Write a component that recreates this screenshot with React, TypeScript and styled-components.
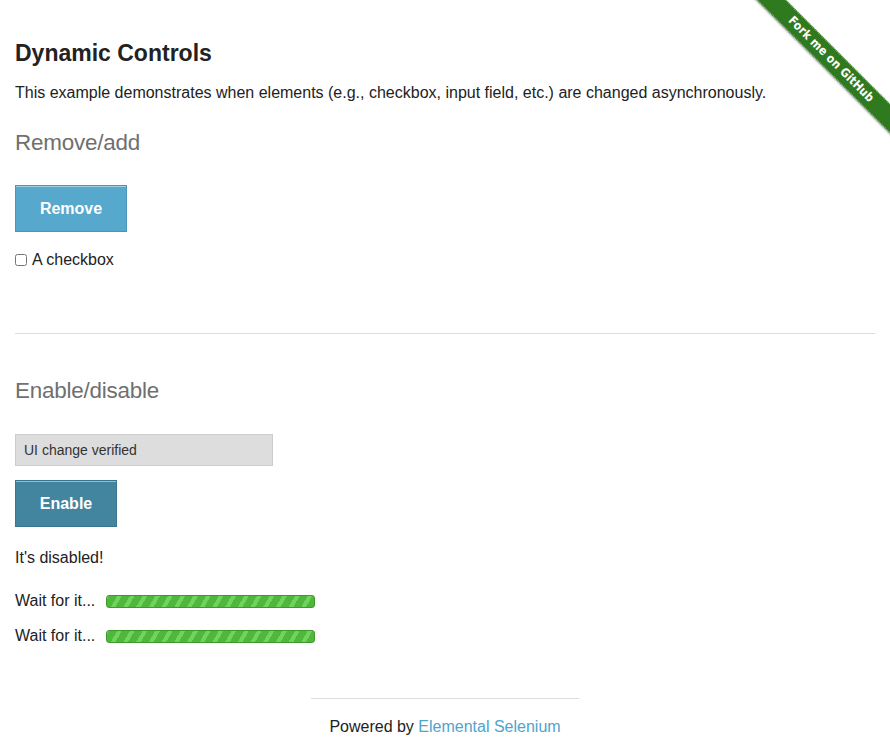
import React from "react";
import styled, { createGlobalStyle } from "styled-components";

const GlobalStyle = createGlobalStyle`
  body {
    margin: 0;
    background: #fff;
    font-family: "Liberation Sans", Arial, sans-serif;
    color: #222;
  }
`;

const App = () => {
  return (
    <>
      <GlobalStyle />
      <Page>
        <Ribbon>
          <Band>Fork me on GitHub</Band>
        </Ribbon>
        <Title>Dynamic Controls</Title>
        <Intro>
          This example demonstrates when elements (e.g., checkbox, input field,
          etc.) are changed asynchronously.
        </Intro>
        <Section>Remove/add</Section>
        <Button $w={112} $tone="light" style={{ marginTop: 28 }}>
          Remove
        </Button>
        <CheckRow>
          <Box type="checkbox" />A checkbox
        </CheckRow>
        <Rule />
        <Section style={{ marginTop: 43 }}>Enable/disable</Section>
        <Field value="UI change verified" disabled readOnly />
        <Button $w={102} $tone="dark" style={{ marginTop: 14 }}>
          Enable
        </Button>
        <Message>It's disabled!</Message>
        <Loading style={{ marginTop: 23 }}>
          Wait for it...
          <Bar />
        </Loading>
        <Loading style={{ marginTop: 15 }}>
          Wait for it...
          <Bar />
        </Loading>
        <Footer>
          <FootRule />
          <FootText>
            Powered by <a href="#">Elemental Selenium</a>
          </FootText>
        </Footer>
      </Page>
    </>
  );
};

export default App;

const Page = styled.div`
  position: relative;
  padding: 39px 15px 0;
  min-height: 717px;
  overflow: hidden;
`;
const Ribbon = styled.div`
  position: absolute;
  top: 0;
  right: 0;
  width: 149px;
  height: 149px;
  overflow: hidden;
`;
const Band = styled.div`
  position: absolute;
  left: -21px;
  top: 49px;
  width: 222px;
  height: 21px;
  box-sizing: border-box;
  transform: rotate(45deg);
  background: #2f7a1f;
  border-top: 1px dotted rgba(255, 255, 255, 0.55);
  border-bottom: 1px dotted rgba(255, 255, 255, 0.55);
  box-shadow: 0 1px 2px rgba(0, 0, 0, 0.35);
  color: #fff;
  font-family: "DejaVu Sans Condensed", "DejaVu Sans", sans-serif;
  font-weight: bold;
  font-size: 12px;
  line-height: 19px;
  text-align: center;
  letter-spacing: 0.1px;
`;
const Title = styled.h3`
  margin: 0;
  font-size: 23px;
  line-height: 28px;
  font-weight: bold;
  color: #222;
`;
const Intro = styled.p`
  margin: 16px 0 0;
  font-size: 16px;
  line-height: 20px;
`;
const Section = styled.h4`
  margin: 26px 0 0;
  font-size: 22.4px;
  line-height: 28px;
  font-weight: normal;
  color: #6f6f6f;
  letter-spacing: -0.2px;
`;
const Button = styled.button<{ $w: number; $tone: "light" | "dark" }>`
  display: block;
  width: ${(p) => p.$w}px;
  height: 47px;
  padding: 0;
  border: 1px solid ${(p) => (p.$tone === "light" ? "#4b95b8" : "#3a7590")};
  background: ${(p) => (p.$tone === "light" ? "#56a8cd" : "#43849f")};
  box-shadow: inset 0 1px 0 rgba(255, 255, 255, 0.45);
  color: #fff;
  font-family: "Liberation Sans", Arial, sans-serif;
  font-weight: bold;
  font-size: 16px;
  cursor: pointer;
`;
const CheckRow = styled.label`
  display: flex;
  align-items: center;
  margin-top: 18px;
  font-size: 16px;
  line-height: 20px;
`;
const Box = styled.input`
  width: 12px;
  height: 12px;
  margin: 0 5px 0 0;
`;
const Rule = styled.hr`
  margin: 63px 0 0;
  border: 0;
  border-top: 1px solid #ddd;
`;
const Field = styled.input`
  display: block;
  margin-top: 29px;
  width: 258px;
  height: 32px;
  box-sizing: border-box;
  padding: 0 8px;
  border: 1px solid #ccc;
  background: #ddd;
  color: #333;
  font-family: "Liberation Sans", Arial, sans-serif;
  font-size: 14px;
  opacity: 1;
`;
const Message = styled.p`
  margin: 21px 0 0;
  font-size: 16px;
  line-height: 20px;
`;
const Loading = styled.div`
  display: flex;
  align-items: center;
  gap: 11px;
  font-size: 16px;
  line-height: 20px;
`;
const Bar = styled.div`
  width: 209px;
  height: 13px;
  box-sizing: border-box;
  border: 1px solid #3f9a2e;
  border-radius: 3px;
  background: repeating-linear-gradient(
    -60deg,
    #4fb83c 0 7px,
    #6fd35c 7px 11px
  );
`;
const Footer = styled.div`
  display: flex;
  flex-direction: column;
  align-items: center;
  margin-top: 52px;
`;
const FootRule = styled.div`
  width: 268px;
  border-top: 1px solid #ddd;
`;
const FootText = styled.div`
  margin-top: 18px;
  font-size: 16px;
  line-height: 20px;
  a {
    color: #4ea4cc;
    text-decoration: none;
  }
`;
